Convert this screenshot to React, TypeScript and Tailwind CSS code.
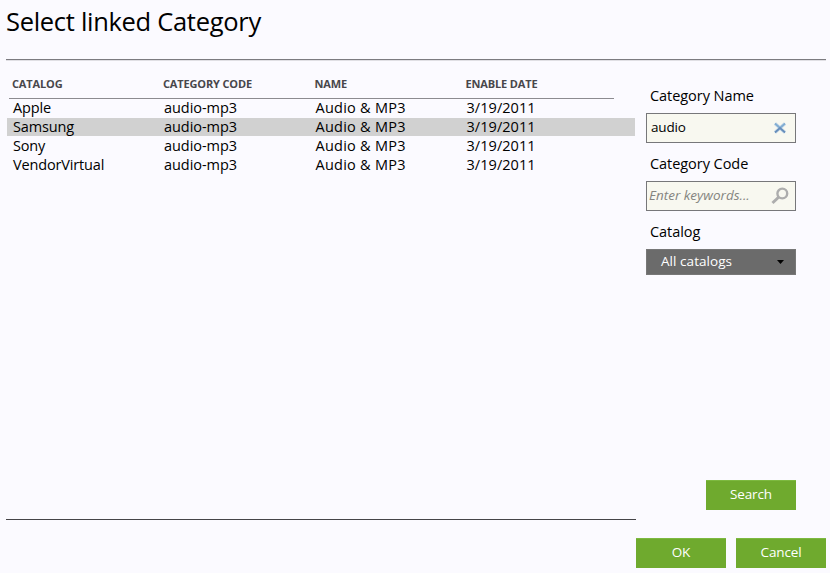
import type { ReactNode } from "react";

const rows = ["Apple", "Samsung", "Sony", "VendorVirtual"];

function Button({ children }: { children: ReactNode }) {
  return (
    <button className="flex h-[30px] w-[90px] items-center justify-center border-t border-[#7db940] bg-[#6faa2e] pb-[2px] text-[13.5px] leading-none tracking-[-0.15px] text-white">
      {children}
    </button>
  );
}

function Label({ children }: { children: ReactNode }) {
  return <div className="pl-1 text-[14.5px] leading-5 tracking-[-0.05px]">{children}</div>;
}

export default function App() {
  return (
    <div className="flex h-[573px] w-[830px] flex-col overflow-hidden bg-[#fbfaff] pl-[6px] font-['Open_Sans',sans-serif] text-black">
      <h1 className="h-[59px] pt-[3px] text-[25.5px] leading-9 tracking-[-0.3px] whitespace-nowrap">Select linked Category</h1>
      <div className="h-[2px] w-[820px] shrink-0 border-b border-[#e0dfe4] bg-[#7c7b80]" />

      <div className="flex h-[477px]">
        <section className="flex h-[459px] w-[630px] flex-col border-b border-[#454447]">
          <div className="ml-[3px] grid h-[38px] w-[605px] shrink-0 grid-cols-[151px_151.5px_151px_151px] border-b border-[#8c8b90] pt-[15px] pl-[3px] text-[11px] leading-4 font-bold tracking-[-0.15px] text-[#48474b]">
            <span>CATALOG</span>
            <span>CATEGORY CODE</span>
            <span>NAME</span>
            <span>ENABLE DATE</span>
          </div>
          {rows.map((name) => (
            <div
              key={name}
              className={`mb-px ml-px grid h-[18px] w-[628px] shrink-0 grid-cols-[151px_151.5px_151px_1fr] pl-[6px] text-[14.5px] leading-[18px] ${name === "Samsung" ? "bg-[#d1d1d1]" : ""}`}
            >
              <span className="tracking-[-0.15px]">{name}</span>
              <span className="tracking-[-0.05px]">audio-mp3</span>
              <span className="tracking-[0.25px]">Audio &amp; MP3</span>
              <span className="tracking-[0.05px]">3/19/2011</span>
            </div>
          ))}
        </section>

        <aside className="ml-[10px] flex w-[150px] flex-col pt-[25px]">
          <Label>Category Name</Label>
          <div className="mt-[7px] flex h-[30px] items-center justify-between border border-[#77777a] bg-[#f8f8f0] pr-[8px] pb-px pl-1 text-[13.5px] tracking-[-0.2px]">
            <span>audio</span>
            <svg width="14" height="14" viewBox="0 0 14 14" className="mt-px" fill="none">
              <path d="M2 2.5 12 11.5M12 2.5 2 11.5" stroke="#c9dbe8" strokeWidth="3.4" />
              <path d="M2 2.5 7 7l5-4.5" stroke="#82add2" strokeWidth="1.8" />
              <path d="M2 11.5 7 7l5 4.5" stroke="#668dbb" strokeWidth="1.8" />
            </svg>
          </div>
          <div className="mt-[11px]"><Label>Category Code</Label></div>
          <div className="mt-[7px] flex h-[30px] items-center justify-between border border-[#77777a] bg-[#f8f8f0] pr-[6px] pl-[2px] text-[13.5px] text-[#858580] italic">
            <span className="pb-[2px]">Enter keywords...</span>
            <svg width="18" height="18" viewBox="0 0 18 18" fill="none" stroke="#adadad">
              <circle cx="11.3" cy="6.5" r="4.9" strokeWidth="2.4" />
              <path d="m7.8 10-6.3 6" strokeWidth="3" />
            </svg>
          </div>
          <div className="mt-[11px]"><Label>Catalog</Label></div>
          <div className="mt-[7px] flex h-[26px] items-center justify-between border border-[#777777] bg-[#6b6b6b] pr-[11px] pl-[14px] text-[13.5px] tracking-[0.05px] text-white">
            <span className="pb-[2px]">All catalogs</span>
            <svg width="7" height="4" viewBox="0 0 7 4"><path d="M0 0h7L3.5 4Z" /></svg>
          </div>
          <div className="mt-[205px] flex justify-end"><Button>Search</Button></div>
        </aside>
      </div>

      <div className="ml-[630px] flex gap-[10px]">
        <Button>OK</Button>
        <Button>Cancel</Button>
      </div>
    </div>
  );
}
